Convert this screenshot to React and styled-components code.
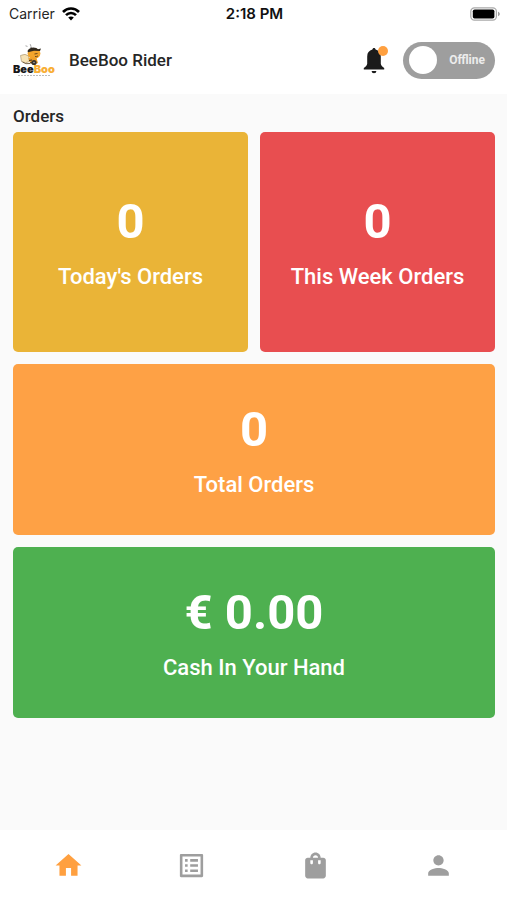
import React from "react";
import styled, { createGlobalStyle } from "styled-components";
import { MdHome, MdListAlt, MdShoppingBag, MdPerson } from "react-icons/md";

const GlobalStyle = createGlobalStyle`
  *, *::before, *::after { box-sizing: border-box; }
  body { margin: 0; background: #fafafa; }
  button { font: inherit; border: 0; padding: 0; background: none; cursor: pointer; }
`;

const Screen = styled.div`
  display: flex;
  flex-direction: column;
  min-height: 100vh;
  background: #fafafa;
  color: #262626;
  font-family: Roboto, "Liberation Sans", sans-serif;
`;

const StatusBar = styled.div`
  display: grid;
  grid-template-columns: 1fr auto 1fr;
  align-items: center;
  height: 28px;
  padding: 0 7px 0 9px;
  background: #fff;
  font-family: Inter, "Liberation Sans", sans-serif;
  font-size: 14px;
  line-height: 20px;
`;

const Carrier = styled.div`
  display: flex;
  align-items: center;
  gap: 7px;
`;

const Clock = styled.time`
  font-size: 15px;
  font-weight: 600;
  color: #111;
`;

const BatterySlot = styled.div`
  display: flex;
  justify-content: flex-end;
`;

const Header = styled.header`
  display: flex;
  align-items: center;
  height: 66px;
  padding: 0 12px 2px 13px;
  background: #fff;
`;

const Title = styled.h1`
  flex: 1;
  margin: 0 0 0 13px;
  font-size: 17px;
  line-height: 24px;
  font-weight: 500;
`;

const BellButton = styled.button`
  display: flex;
  margin-right: 13px;
`;

const StatusSwitch = styled.button`
  display: flex;
  align-items: center;
  justify-content: space-between;
  width: 92px;
  height: 37px;
  padding: 0 10px 0 6px;
  border-radius: 19px;
  background: #9e9e9e;
  color: #ececec;
  font-size: 12px;
  font-weight: 700;
`;

const Knob = styled.span`
  width: 28px;
  height: 28px;
  border-radius: 50%;
  background: #fff;
`;

const Main = styled.main`
  flex: 1;
  padding: 12px 12px 12px 13px;
`;

const SectionTitle = styled.h2`
  margin: 0 0 6px;
  font-size: 17px;
  line-height: 20px;
  font-weight: 500;
`;

const Cards = styled.div`
  display: grid;
  grid-template-columns: 1fr 1fr;
  gap: 12px;
`;

const Card = styled.section`
  display: flex;
  flex-direction: column;
  align-items: center;
  gap: 14px;
  grid-column: ${(p) => (p.$wide ? "1 / -1" : "auto")};
  padding: ${(p) => (p.$wide ? "38px 12px 37px" : "62px 12px")};
  border-radius: 5px;
  background: ${(p) => p.$color};
  color: #fff;
`;

const Amount = styled.strong`
  font-size: 49px;
  line-height: 56px;
  font-weight: 700;
`;

const Label = styled.span`
  font-size: 22px;
  line-height: 26px;
  font-weight: 500;
`;

const TabBar = styled.nav`
  position: sticky;
  bottom: 0;
  display: flex;
  height: 70px;
  padding: 0 7px;
  background: #fff;
`;

const Tab = styled.button`
  flex: 1;
  display: flex;
  align-items: center;
  justify-content: center;
  color: ${(p) => (p.$active ? "#ffa040" : "#9e9e9e")};
`;

function Wifi() {
  return (
    <svg width="18" height="14" viewBox="0 0 18 14" role="img" aria-label="Wi-Fi">
      <g fill="none" stroke="#000" strokeWidth="2.6">
        <path d="M1 5C5.4.4 12.6.4 17 5" />
        <path d="M4 8.200C6.800 5.300 11.200 5.300 14 8.200" />
      </g>
      <path d="M9 13.500 6.200 10.600C7.800 9.200 10.200 9.200 11.800 10.600Z" />
    </svg>
  );
}

function Battery() {
  return (
    <svg width="30" height="14" viewBox="0 0 30 14" role="img" aria-label="Battery full">
      <rect x=".8" y=".8" width="25.6" height="12.4" rx="3.6" fill="#fff" stroke="#a9a9a9" strokeWidth="1.2" />
      <rect x="2.8" y="2.500" width="21.6" height="9" rx="1.8" />
      <path d="M28 4.800c2.400.7 2.400 3.700 0 4.400z" fill="#a0a0a0" />
    </svg>
  );
}

function Bell() {
  return (
    <svg width="27" height="30" viewBox="0 0 27 30" aria-hidden="true">
      <path
        fill="#1b1b1b"
        d="M11 3c.9 0 1.500.7 1.600 1.600 3.300.8 5.200 3.300 5.200 6.800v7.400c.3 1.900 1.400 2.800 3.400 4.200v1.400H.8V23c2-1.400 3.100-2.300 3.400-4.200v-7.400c0-3.500 1.900-6 5.200-6.800C9.500 3.700 10.100 3 11 3zM8.600 26h4.800a2.400 2.200 0 0 1-4.800 0z"
      />
      <circle cx="20" cy="6" r="5" fill="#ffa040" />
    </svg>
  );
}

function Logo() {
  return (
    <svg width="43" height="34" viewBox="0 0 43 34" role="img" aria-label="BeeBoo">
      <g fill="none" stroke="#8b8b8b" strokeWidth=".8">
        <path d="M12.500 2.800l2 .6M17.200 1.200l.9 2.300M17 4.200l2 .3" />
      </g>
      <path d="M7.500 12.500q5-2.500 8 .5l1 5.500q-4 2.500-8 0z" fill="#f6e2b4" stroke="#ac9876" strokeWidth=".7" />
      <path d="M9.500 19q3 2.600 7.500 1.500" fill="none" stroke="#6b5434" strokeWidth=".9" />
      <ellipse cx="21" cy="10.500" rx="6.400" ry="5.400" fill="#f3a52c" />
      <path d="M14.500 8q1.500-3.500 6-3.500 3.300 0 4.500 1.700l3-.8-1 2.600-6-.3-6 1.600z" fill="#30291f" />
      <path d="M21.500 11l3-.5M22 13.500q2 .7 3-.7" stroke="#463018" strokeWidth=".8" fill="none" />
      <path d="M15.500 15q4-1 8 0l1.500 5-4 1.800q-5-1-5.500-6.800z" fill="#eea02b" />
      <path d="M16 17.500l3-.5M17 20l3-1" stroke="#41301c" strokeWidth="1.2" />
      <circle cx="21" cy="19.500" r="2.600" fill="#38332b" />
      <circle cx="21" cy="19.500" r=".8" fill="#aaa" />
      <text x="0" y="30" fontFamily="Inter, sans-serif" fontSize="11" fontWeight="900">
        <tspan fill="#171717">Bee</tspan>
        <tspan fill="#f8ae35">Boo</tspan>
      </text>
      <path d="M5 32.500h33" stroke="#aaa" strokeWidth=".8" strokeDasharray="2 1" />
    </svg>
  );
}

const cards = [
  { value: "0", label: "Today's Orders", color: "#eab437" },
  { value: "0", label: "This Week Orders", color: "#e84e50" },
  { value: "0", label: "Total Orders", color: "#fea145", wide: true },
  { value: "€ 0.00", label: "Cash In Your Hand", color: "#4eb050", wide: true },
];

const tabs = [
  { name: "Home", Icon: MdHome },
  { name: "Orders list", Icon: MdListAlt },
  { name: "Shopping bag", Icon: MdShoppingBag },
  { name: "Profile", Icon: MdPerson },
];

export default function App() {
  const [active, setActive] = React.useState("Home");
  return (
    <Screen>
      <GlobalStyle />
      <StatusBar>
        <Carrier>
          Carrier
          <Wifi />
        </Carrier>
        <Clock>2:18 PM</Clock>
        <BatterySlot>
          <Battery />
        </BatterySlot>
      </StatusBar>
      <Header>
        <Logo />
        <Title>BeeBoo Rider</Title>
        <BellButton aria-label="Notifications">
          <Bell />
        </BellButton>
        <StatusSwitch role="switch" aria-checked="false">
          <Knob />
          Offline
        </StatusSwitch>
      </Header>
      <Main>
        <SectionTitle>Orders</SectionTitle>
        <Cards>
          {cards.map((c) => (
            <Card key={c.label} $color={c.color} $wide={c.wide}>
              <Amount>{c.value}</Amount>
              <Label>{c.label}</Label>
            </Card>
          ))}
        </Cards>
      </Main>
      <TabBar>
        {tabs.map(({ name, Icon }) => (
          <Tab key={name} aria-label={name} $active={active === name} onClick={() => setActive(name)}>
            <Icon size={31} />
          </Tab>
        ))}
      </TabBar>
    </Screen>
  );
}
